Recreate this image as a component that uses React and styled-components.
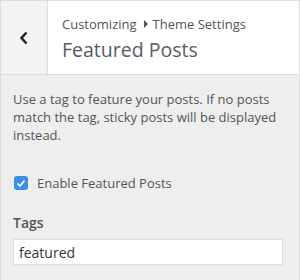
import styled, { createGlobalStyle } from 'styled-components'

const Global = createGlobalStyle`
  html, body { margin: 0; padding: 0; background: #eee; }
  body { font-family: "Open Sans", "Noto Sans", sans-serif; }
`

const Panel = styled.div`
  width: 300px;
  height: 280px;
  box-sizing: border-box;
  border: 1px solid #ddd;
  border-bottom: none;
  background: #eee;
  overflow: hidden;
`

const Header = styled.header`
  display: flex;
  height: 73px;
  background: #fff;
  border-bottom: 1px solid #ddd;
`

const BackButton = styled.button`
  width: 47px;
  flex: none;
  border: none;
  border-right: 1px solid #ddd;
  background: #f3f3f3;
  display: flex;
  align-items: center;
  justify-content: center;
  padding: 0;
  color: #23282d;
`

const Titles = styled.div`
  padding: 14px 0 0 14px;
  display: flex;
  flex-direction: column;
`

const Crumbs = styled.div`
  font-size: 13px;
  line-height: 18px;
  color: #555;
  display: flex;
  align-items: center;
  gap: 4px;
`

const Caret = styled.span`
  width: 0;
  height: 0;
  border-top: 4px solid transparent;
  border-bottom: 4px solid transparent;
  border-left: 4px solid #555;
  margin: 0 1px 0 3px;
`

const Title = styled.h1`
  margin: 4px 0 0;
  font-size: 19.5px;
  line-height: 26px;
  font-weight: 400;
  color: #555d66;
`

const Body = styled.div`
  padding: 15px 12px;
  display: flex;
  flex-direction: column;
`

const Description = styled.p`
  margin: 0;
  font-size: 13px;
  line-height: 18px;
  color: #555;
`

const CheckRow = styled.label`
  display: flex;
  align-items: center;
  gap: 9px;
  margin: 30px 0 0 1px;
  font-size: 13px;
  color: #555;
`

const Box = styled.span`
  width: 14px;
  height: 14px;
  border-radius: 3px;
  background: #3a8ee6;
  display: flex;
  align-items: center;
  justify-content: center;
`

const FieldLabel = styled.div`
  margin-top: 21px;
  font-size: 14px;
  font-weight: 600;
  color: #555;
  line-height: 20px;
`

const Input = styled.input`
  margin-top: 6px;
  width: 270px;
  height: 26px;
  box-sizing: border-box;
  border: 1px solid #ddd;
  background: #fff;
  padding: 0 5px;
  font-family: "Open Sans", "Noto Sans", sans-serif;
  font-size: 14px;
  color: #32373c;
  outline: none;
`

export default function App() {
  return (
    <>
      <Global />
      <Panel>
        <Header>
          <BackButton aria-label="Back">
            <svg width="10" height="14" viewBox="0 0 10 14">
              <path d="M7.5 1.5 L2.5 7 L7.5 12.5" fill="none" stroke="#23282d" strokeWidth="2.6" />
            </svg>
          </BackButton>
          <Titles>
            <Crumbs>
              Customizing <Caret /> Theme Settings
            </Crumbs>
            <Title>Featured Posts</Title>
          </Titles>
        </Header>
        <Body>
          <Description>
            Use a tag to feature your posts. If no posts match the tag, sticky posts will be displayed instead.
          </Description>
          <CheckRow>
            <Box>
              <svg width="10" height="9" viewBox="0 0 10 9">
                <path d="M1.5 4.5 L4 7 L8.5 1.5" fill="none" stroke="#fff" strokeWidth="1.6" />
              </svg>
            </Box>
            Enable Featured Posts
          </CheckRow>
          <FieldLabel>Tags</FieldLabel>
          <Input defaultValue="featured" />
        </Body>
      </Panel>
    </>
  )
}
